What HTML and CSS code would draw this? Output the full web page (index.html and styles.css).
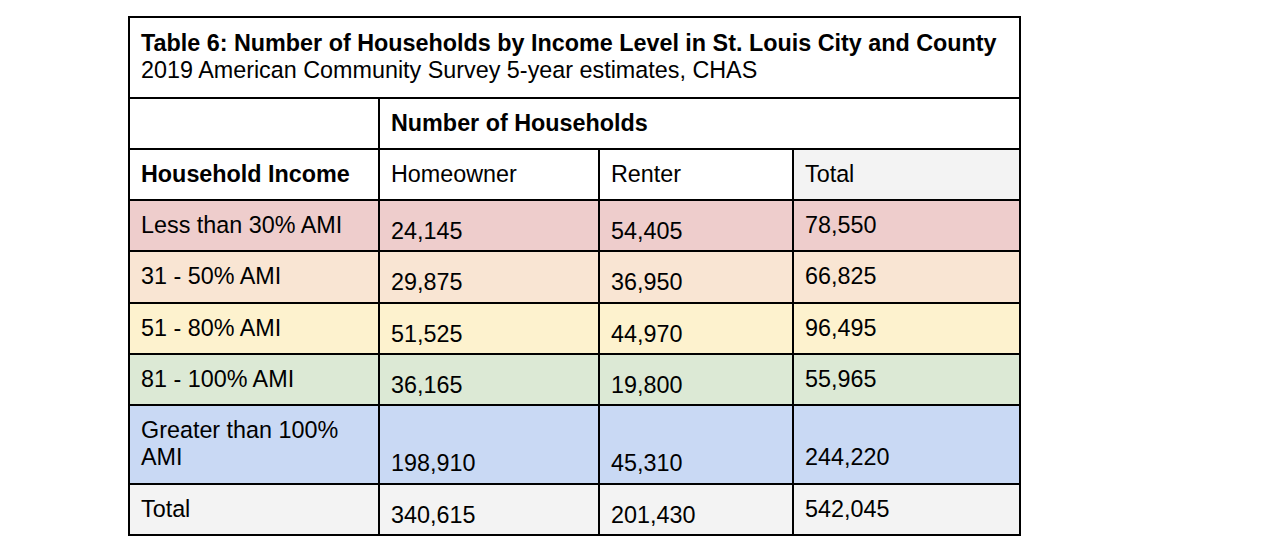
FILE: index.html
```html
<!DOCTYPE html>
<html lang="en">
<head>
<meta charset="utf-8">
<title>Table 6: Number of Households by Income Level</title>
<link rel="stylesheet" href="styles.css">
</head>
<body>
<table class="data-table">
  <colgroup>
    <col class="col-label">
    <col class="col-home">
    <col class="col-rent">
    <col class="col-total">
  </colgroup>
  <tbody>
    <tr>
      <td class="title-cell" colspan="4">
        <div class="title">Table 6: Number of Households by Income Level in St. Louis City and County</div>
        <div class="subtitle">2019 American Community Survey 5-year estimates, CHAS</div>
      </td>
    </tr>
    <tr>
      <td></td>
      <td class="strong" colspan="3">Number of Households</td>
    </tr>
    <tr>
      <td class="strong">Household Income</td>
      <td>Homeowner</td>
      <td>Renter</td>
      <td class="gray">Total</td>
    </tr>
    <tr class="row-red">
      <td>Less than 30% AMI</td>
      <td class="num">24,145</td>
      <td class="num">54,405</td>
      <td class="num-total">78,550</td>
    </tr>
    <tr class="row-orange">
      <td>31 - 50% AMI</td>
      <td class="num">29,875</td>
      <td class="num">36,950</td>
      <td class="num-total">66,825</td>
    </tr>
    <tr class="row-yellow">
      <td>51 - 80% AMI</td>
      <td class="num">51,525</td>
      <td class="num">44,970</td>
      <td class="num-total">96,495</td>
    </tr>
    <tr class="row-green">
      <td>81 - 100% AMI</td>
      <td class="num">36,165</td>
      <td class="num">19,800</td>
      <td class="num-total">55,965</td>
    </tr>
    <tr class="row-blue">
      <td>Greater than 100% AMI</td>
      <td class="num">198,910</td>
      <td class="num">45,310</td>
      <td class="num-total">244,220</td>
    </tr>
    <tr class="row-gray">
      <td>Total</td>
      <td class="num">340,615</td>
      <td class="num">201,430</td>
      <td class="num-total">542,045</td>
    </tr>
  </tbody>
</table>
</body>
</html>
```

FILE: styles.css
```css
html, body {
  background: #ffffff;
}

body {
  margin: 0;
  padding: 16px 0 0 128px;
  font-family: "Liberation Sans", Arial, Helvetica, sans-serif;
  color: #000000;
}

.data-table {
  border-collapse: collapse;
  table-layout: fixed;
  font-size: 23.35px;
  line-height: 27.25px;
}

.col-label { width: 250px; }
.col-home  { width: 220px; }
.col-rent  { width: 194px; }
.col-total { width: 227px; }

.data-table td {
  border: 2px solid #000000;
  padding: 11px 8px 11px 11px;
  vertical-align: top;
  text-align: left;
  font-weight: normal;
  background: #ffffff;
}

.data-table td.title-cell {
  padding-top: 12px;
  padding-bottom: 12px;
}

.title {
  font-weight: bold;
}

.data-table td.strong {
  font-weight: bold;
}

.data-table td.num {
  vertical-align: bottom;
  padding-bottom: 5px;
}

.data-table td.num-total {
  vertical-align: bottom;
}

.data-table td.gray,
.row-gray td { background: #f3f3f3; }

.row-red td    { background: #eecdcc; }
.row-orange td { background: #f9e5d3; }
.row-yellow td { background: #fdf2ce; }
.row-green td  { background: #dce9d5; }
.row-blue td   { background: #c9d9f4; }
```
